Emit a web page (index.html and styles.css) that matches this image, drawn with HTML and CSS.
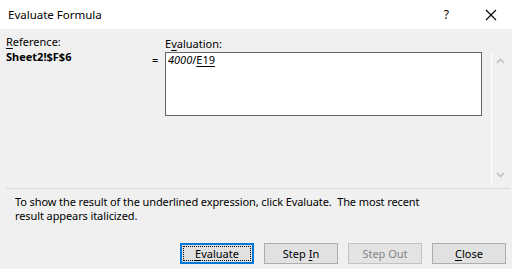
FILE: index.html
```html
<!DOCTYPE html>
<html>
<head>
<meta charset="utf-8">
<link rel="stylesheet" href="styles.css">
</head>
<body>
<div class="window">
  <header class="titlebar">
    <span class="title">Evaluate Formula</span>
    <div class="controls">
      <span class="help">?</span>
      <svg class="close-x" width="12" height="12" viewBox="0 0 12 12"><path d="M1 1 L11 11 M11 1 L1 11" stroke="#000" stroke-width="1.1" fill="none"/></svg>
    </div>
  </header>
  <section class="content">
    <div class="top">
      <div class="ref-col">
        <div class="label ref-label"><u>R</u>eference:</div>
        <div class="ref">Sheet2!$F$6</div>
      </div>
      <div class="eq">=</div>
      <div class="eval-col">
        <div class="label">E<u>v</u>aluation:</div>
        <div class="box"><i>4000</i>/<u>E19</u></div>
      </div>
      <div class="scroll">
        <svg width="9" height="6" viewBox="0 0 9 6"><path d="M1 5 L4.5 1.5 L8 5" stroke="#c2c2c2" stroke-width="1.6" fill="none"/></svg>
        <svg width="9" height="6" viewBox="0 0 9 6"><path d="M1 1 L4.5 4.5 L8 1" stroke="#c2c2c2" stroke-width="1.6" fill="none"/></svg>
      </div>
    </div>
    <div class="sep"></div>
    <p class="hint">To show the result of the underlined expression, click Evaluate.&nbsp; The most recent<br>result appears italicized.</p>
    <div class="buttons">
      <button class="btn default"><u>E</u>valuate</button>
      <button class="btn">Step <u>I</u>n</button>
      <button class="btn disabled">Step Out</button>
      <button class="btn"><u>C</u>lose</button>
    </div>
  </section>
</div>
</body>
</html>
```

FILE: styles.css
```css
* { box-sizing: border-box; }
html, body { margin: 0; padding: 0; }
body {
  width: 512px;
  height: 269px;
  overflow: hidden;
  background: #f0f0f0;
  font-family: "Noto Sans", "Segoe UI", sans-serif;
  font-size: 11px;
  color: #000;
}
.window { width: 512px; height: 269px; display: flex; flex-direction: column; }
.titlebar {
  height: 29px;
  background: #fff;
  display: flex;
  align-items: center;
  padding-left: 8px;
}
.title { font-size: 11.5px; line-height: 16px; }
.controls {
  margin-left: auto;
  display: flex;
  align-items: center;
  gap: 36px;
  padding-right: 15px;
}
.help { font-size: 12px; line-height: 16px; }
.close-x { display: block; }
.content { flex: 1; display: flex; flex-direction: column; }
.top {
  display: flex;
  padding: 6px 0 0 6px;
  height: 156px;
}
.label { line-height: 17px; white-space: nowrap; }
.ref-col { width: 142px; }
.ref-label { line-height: 14px; }
.ref { font-weight: bold; line-height: 16px; }
.eq { width: 17px; padding: 17px 0 0 4px; line-height: 16px; }
.eval-col { width: 317px; }
.box {
  height: 64px;
  background: #fff;
  border: 1px solid #646464;
  padding: 0 2px;
  line-height: 14px;
}
.scroll {
  margin: 17px 0 0 9px;
  width: 17px;
  height: 133px;
  border-left: 1px solid #fff;
  display: flex;
  flex-direction: column;
  justify-content: space-between;
  align-items: center;
  padding: 6px 0 7px 0;
}
.scroll svg { display: block; }
.sep {
  margin: 3px 2px 0 6px;
  height: 1px;
  background: #dadada;
}
.hint {
  margin: 6px 0 0 15px;
  line-height: 14px;
  letter-spacing: -0.1px;
}
.buttons {
  display: flex;
  justify-content: flex-end;
  gap: 10px;
  padding-right: 6px;
  margin-top: 20px;
}
.btn {
  width: 74px;
  height: 21px;
  background: #e1e1e1;
  border: 1px solid #adadad;
  font-family: inherit;
  font-size: 11px;
  color: #000;
  padding: 0;
  line-height: 17px;
}
.btn.default {
  border: 2px solid #0078d7;
  outline: 1px dotted #000;
  outline-offset: -4px;
}
.btn.disabled { color: #838383; border-color: #c3c3c3; background: #e3e3e3; }
u { text-decoration: underline; text-underline-offset: 2px; }
```
